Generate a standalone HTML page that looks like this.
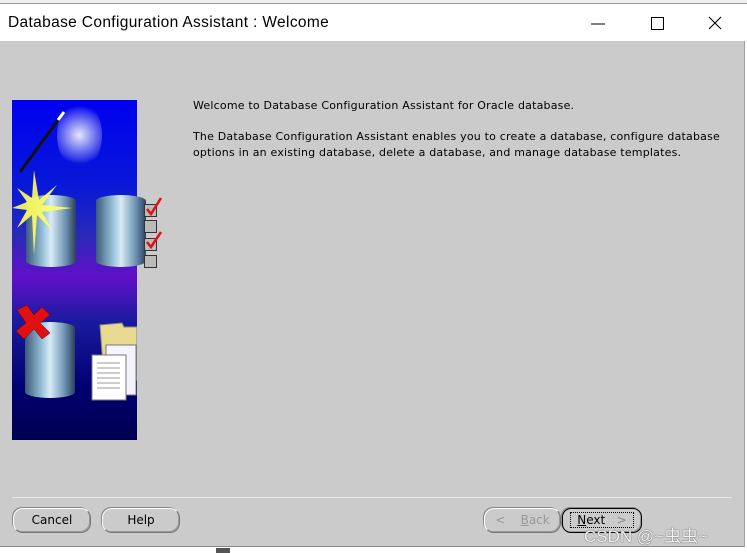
<!DOCTYPE html>
<html><head><style>
*{margin:0;padding:0;box-sizing:border-box}
body{width:747px;height:553px;background:#fff;position:relative;overflow:hidden;font-family:"Liberation Sans",sans-serif}
.top{position:absolute;left:0;top:0;width:747px;height:4px;background:#f0f0f0;border-bottom:1px solid #9a9a9a}
.title{position:absolute;left:0;top:4px;width:745px;height:37px;background:#fff;font-size:15.5px;color:#000;font-family:"Liberation Sans","DejaVu Sans",sans-serif}
.title span{position:absolute;left:8px;top:10px;letter-spacing:.35px}
.body{position:absolute;left:0;top:41px;width:745px;height:506px;background:#cbcbcb;border-bottom:1px solid #8a8a8a;border-right:1px solid #a0a0a0}
.panel{position:absolute;left:12px;top:100px;width:125px;height:340px;background:linear-gradient(180deg,#0000f0 0%,#0818d8 25%,#2a2ab8 40%,#6010c8 52%,#1a1aa0 65%,#000070 85%,#000050 100%)}
.txt{position:absolute;left:193px;font-size:11px;color:#000;line-height:16px;font-family:"DejaVu Sans",sans-serif;letter-spacing:.2px;white-space:nowrap}
.sep{position:absolute;left:12px;top:497px;width:720px;height:1px;background:#9a9a9a;border-bottom:1px solid #e8e8e8}
.btn{position:absolute;top:508px;height:25px;border:1px solid #777;border-top-color:#fff;border-left-color:#fff;border-radius:10px;font-size:12px;text-align:center;line-height:23px;color:#000;box-shadow:inset -1px -1px 0 #999,-1px -1px 0 #888;font-family:"DejaVu Sans",sans-serif}
.cyl{position:absolute;width:50px;border-radius:25px/6px;background:linear-gradient(90deg,#3a5a7a,#9cc4dc 35%,#d8ecf6 50%,#6a90b0 80%,#2a4058)}
</style></head><body>
<div class="top"></div>
<div class="title"><span>Database Configuration Assistant : Welcome</span>
<svg style="position:absolute;left:585px;top:10px" width="140" height="20"><line x1="6" y1="10" x2="20" y2="10" stroke="#000" stroke-width="1"/><rect x="66.5" y="3.5" width="12" height="12" fill="none" stroke="#000"/><path d="M124 3 L136 15 M136 3 L124 15" stroke="#000" stroke-width="1.1"/></svg></div>
<div class="body"></div>
<div class="panel">
<div style="position:absolute;left:45px;top:0;width:45px;height:70px;border-radius:50%;background:radial-gradient(circle,rgba(255,255,255,.9),rgba(200,200,255,.2) 60%,transparent 70%)"></div>
<svg style="position:absolute;left:0;top:0" width="125" height="340"><line x1="8" y1="72" x2="52" y2="12" stroke="#111" stroke-width="3"/><line x1="46" y1="20" x2="52" y2="12" stroke="#fff" stroke-width="3"/></svg>
<div class="cyl" style="left:14px;top:95px;height:72px"></div>
<div class="cyl" style="left:84px;top:95px;height:72px"></div>
<div class="cyl" style="left:13px;top:222px;height:76px"></div>
<svg style="position:absolute;left:0;top:60px" width="125" height="120"><polygon points="22,10 27,40 45,25 30,45 60,48 30,52 40,70 25,55 22,95 20,55 5,68 15,50 0,48 15,42 5,28 20,38" fill="#ffff60" opacity=".9"/></svg>
<svg style="position:absolute;left:0;top:205px" width="125" height="135"><path d="M5 5 L15 0 L22 10 L30 2 L38 10 L28 18 L38 28 L30 34 L22 24 L12 34 L4 26 L14 18 Z" fill="#e01010" stroke="#600" stroke-width=".5"/>
<path d="M88 20 L110 18 L112 22 L125 22 L125 75 L92 75 Z" fill="#e8d890" stroke="#887"/>
<rect x="94" y="40" width="30" height="50" fill="#f4f4ff" stroke="#777"/>
<rect x="80" y="50" width="34" height="45" fill="#fff" stroke="#777"/>
<g stroke="#999" stroke-width="1"><line x1="85" y1="58" x2="108" y2="58"/><line x1="85" y1="63" x2="108" y2="63"/><line x1="85" y1="68" x2="108" y2="68"/><line x1="85" y1="73" x2="108" y2="73"/><line x1="85" y1="78" x2="108" y2="78"/><line x1="85" y1="83" x2="108" y2="83"/></g></svg>
</div>
<svg style="position:absolute;left:143px;top:195px" width="20" height="75"><g fill="#bbb" stroke="#333"><rect x="1.5" y="9.5" width="12" height="12"/><rect x="1.5" y="25.5" width="12" height="12"/><rect x="1.5" y="43.5" width="12" height="12"/><rect x="1.5" y="60.5" width="12" height="12"/></g><path d="M4 14 L8 19 L18 3 M4 47 L8 52 L18 37" stroke="#e01010" stroke-width="2.5" fill="none"/></svg>
<div class="txt" style="top:98px">Welcome to Database Configuration Assistant for Oracle database.</div>
<div class="txt" style="top:129px">The Database Configuration Assistant enables you to create a database, configure database<br>options in an existing database, delete a database, and manage database templates.</div>
<div class="sep"></div>
<div class="btn" style="left:13px;width:78px">Cancel</div>
<div class="btn" style="left:102px;width:78px">Help</div>
<div class="btn" style="left:484px;width:77px;color:#999">&lt;&nbsp;&nbsp;&nbsp; <u>B</u>ack</div>
<div class="btn" style="left:562px;width:80px;border:1.5px solid #000;border-radius:9px"><span style="outline:1px dotted #000;padding:0 6px"><u>N</u>ext&nbsp;&nbsp;&nbsp;<span style="color:#888">&gt;</span></span></div>
<div style="position:absolute;left:584px;top:522px;font-size:17px;color:#f4f4f4;text-shadow:0 0 1px #555,0 0 1px #555;font-family:'Liberation Sans','Noto Sans CJK SC',sans-serif">CSDN @~虫虫~</div>
<div style="position:absolute;left:216px;top:548px;width:14px;height:5px;background:#555"></div>
</body></html>
